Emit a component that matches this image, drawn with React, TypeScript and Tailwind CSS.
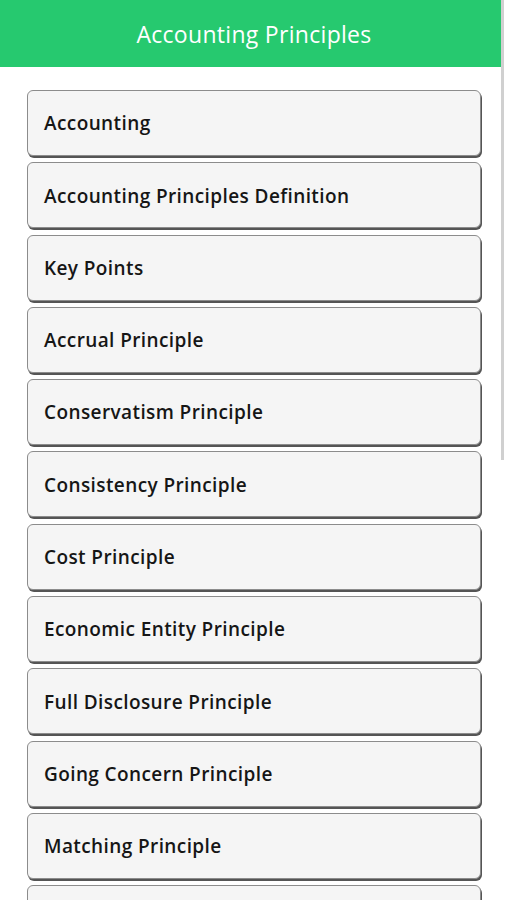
const items = [
  "Accounting",
  "Accounting Principles Definition",
  "Key Points",
  "Accrual Principle",
  "Conservatism Principle",
  "Consistency Principle",
  "Cost Principle",
  "Economic Entity Principle",
  "Full Disclosure Principle",
  "Going Concern Principle",
  "Matching Principle",
  "Materiality Principle",
];

export default function App() {
  return (
    <div className="relative h-[900px] w-[506px] overflow-hidden bg-white font-['Open_Sans',sans-serif]">
      {/* Header */}
      <header className="flex h-[67px] w-[501px] items-center justify-center bg-[#26c96f] pl-[7px] pt-[2px]">
        <h1 className="text-[23px] tracking-[0.3px] text-white">Accounting Principles</h1>
      </header>

      {/* List */}
      <div className="flex w-[501px] flex-col gap-[6.3px] pl-[27px] pt-[23px]">
        {items.map((item) => (
          <button
            key={item}
            className="flex h-[66px] w-[454px] shrink-0 items-center rounded-[6px] border border-[#8c8c8c] bg-[#f5f5f5] pl-[16px] pt-[1px] text-left text-[19px] font-semibold tracking-[0.4px] text-[#161616] shadow-[1px_2px_0_#555]"
          >
            {item}
          </button>
        ))}
      </div>

      {/* Scrollbar */}
      <div className="absolute right-[2px] top-0 h-[460px] w-[3px] bg-[#d0d0d0]" />
    </div>
  );
}
